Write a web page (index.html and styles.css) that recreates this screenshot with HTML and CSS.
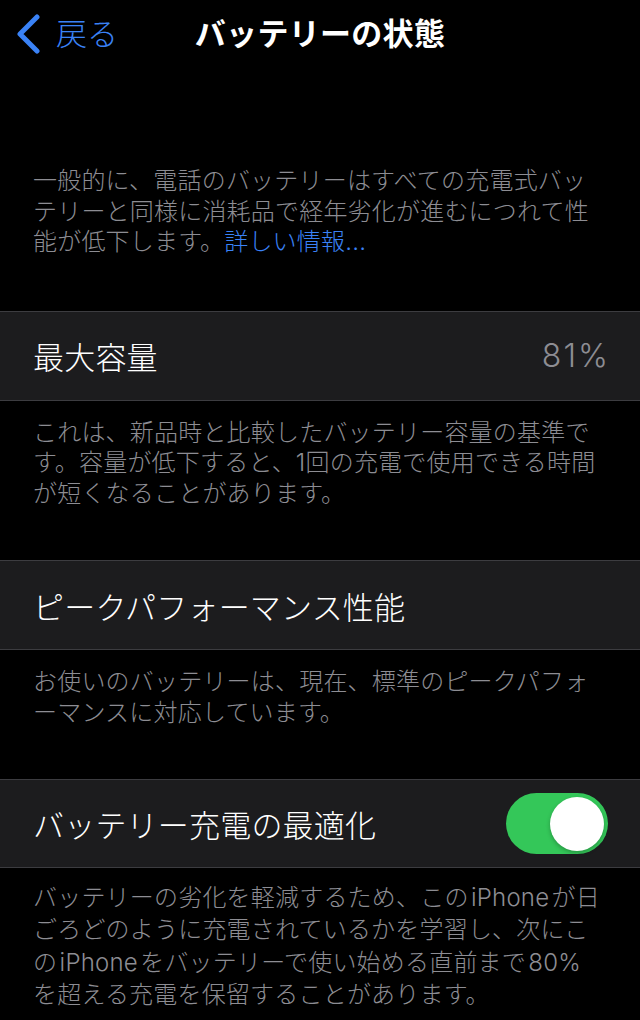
FILE: index.html
```html
<!DOCTYPE html>
<html lang="ja">
<head>
    <meta charset="UTF-8">
    <meta name="viewport" content="width=device-width, initial-scale=1.0">
    <title>バッテリーの状態</title>
    <link rel="stylesheet" href="styles.css">
</head>
<body>
    <!-- Barre de navigation -->
    <header class="nav-bar">
        <a href="#" class="back-link">
            <svg class="chevron" width="26" height="40" viewBox="0 0 26 40">
                <polyline points="21,3 4,20 21,37" fill="none" stroke="currentColor" stroke-width="5" stroke-linecap="round" stroke-linejoin="round"/>
            </svg>
            <span>戻る</span>
        </a>
        <h1 class="nav-title">バッテリーの状態</h1>
    </header>

    <!-- Texte d'introduction -->
    <p class="intro">一般的に、電話のバッテリーはすべての充電式バッ<br>テリーと同様に消耗品で経年劣化が進むにつれて性<br>能が低下します。<a href="#" class="more-link">詳しい情報...</a></p>

    <!-- Capacité maximale -->
    <div class="group group-capacity">
        <span class="row-label">最大容量</span>
        <span class="row-value">81%</span>
    </div>
    <p class="note">これは、新品時と比較したバッテリー容量の基準で<br>す。容量が低下すると、1回の充電で使用できる時間<br>が短くなることがあります。</p>

    <!-- Performance de pointe -->
    <div class="group group-peak">
        <span class="row-label">ピークパフォーマンス性能</span>
    </div>
    <p class="note">お使いのバッテリーは、現在、標準のピークパフォ<br>ーマンスに対応しています。</p>

    <!-- Recharge optimisée -->
    <div class="group group-charge">
        <span class="row-label">バッテリー充電の最適化</span>
        <div class="switch on" onclick="this.classList.toggle('on')">
            <div class="knob"></div>
        </div>
    </div>
    <p class="note note-last">バッテリーの劣化を軽減するため、この&#8202;iPhone&#8202;が日<br>ごろどのように充電されているかを学習し、次にこ<br>の&#8202;iPhone&#8202;をバッテリーで使い始める直前まで&#8202;80%<br>を超える充電を保留することがあります。</p>
</body>
</html>
```

FILE: styles.css
```css
/* Fond sombre façon réglages iOS */
body {
    font-family: Inter, "Noto Sans CJK JP", sans-serif;
    margin: 0;
    padding: 0;
    background-color: #000000;
    color: #ffffff;
    width: 640px;
    height: 1020px;
    overflow: hidden;
}

/* Barre de navigation */
.nav-bar {
    position: relative;
    height: 68px;
    display: flex;
    align-items: center;
    justify-content: center;
}

.back-link {
    position: absolute;
    left: 16px;
    top: 14px;
    display: flex;
    align-items: center;
    gap: 14px;
    color: #3a82f6;
    text-decoration: none;
    font-size: 31px;
    font-weight: 300;
    line-height: 40px;
}

.chevron {
    display: block;
}

.nav-title {
    margin: 0;
    font-size: 31px;
    font-weight: 700;
    line-height: 40px;
    letter-spacing: 0.3px;
}

/* Paragraphes gris */
.intro,
.note {
    margin: 0;
    padding: 0 33px;
    font-size: 24px;
    font-weight: 300;
    line-height: 30.5px;
    letter-spacing: 0.2px;
    color: #8d8d93;
    white-space: nowrap;
}

.intro {
    padding-top: 98px;
    padding-bottom: 53px;
}

.more-link {
    color: #3a82f6;
    text-decoration: none;
}

.note {
    padding-top: 17px;
    padding-bottom: 51px;
}

.note-last {
    padding-top: 14px;
    line-height: 32.3px;
}

/* Groupes de cellules */
.group {
    height: 88px;
    background-color: #1c1c1e;
    border-top: 1px solid #3c3c40;
    border-bottom: 1px solid #3c3c40;
    display: flex;
    align-items: center;
    justify-content: space-between;
    padding: 0 32px 0 33px;
}

.group-charge {
    height: 87px;
}

.row-label {
    font-size: 31px;
    font-weight: 300;
    letter-spacing: 0.2px;
}

.row-value {
    font-size: 32px;
    font-weight: 300;
    letter-spacing: 2px;
    margin-right: -2px;
    color: #8d8d93;
}

/* Interrupteur */
.switch {
    width: 102px;
    height: 61px;
    border-radius: 31px;
    background-color: #3a3a3c;
    position: relative;
    cursor: pointer;
}

.switch.on {
    background-color: #34c759;
}

.knob {
    position: absolute;
    top: 3.5px;
    left: 4px;
    width: 54px;
    height: 54px;
    border-radius: 50%;
    background-color: #ffffff;
    box-shadow: 0 2px 4px rgba(0, 0, 0, 0.25);
}

.switch.on .knob {
    left: 44px;
}
```
